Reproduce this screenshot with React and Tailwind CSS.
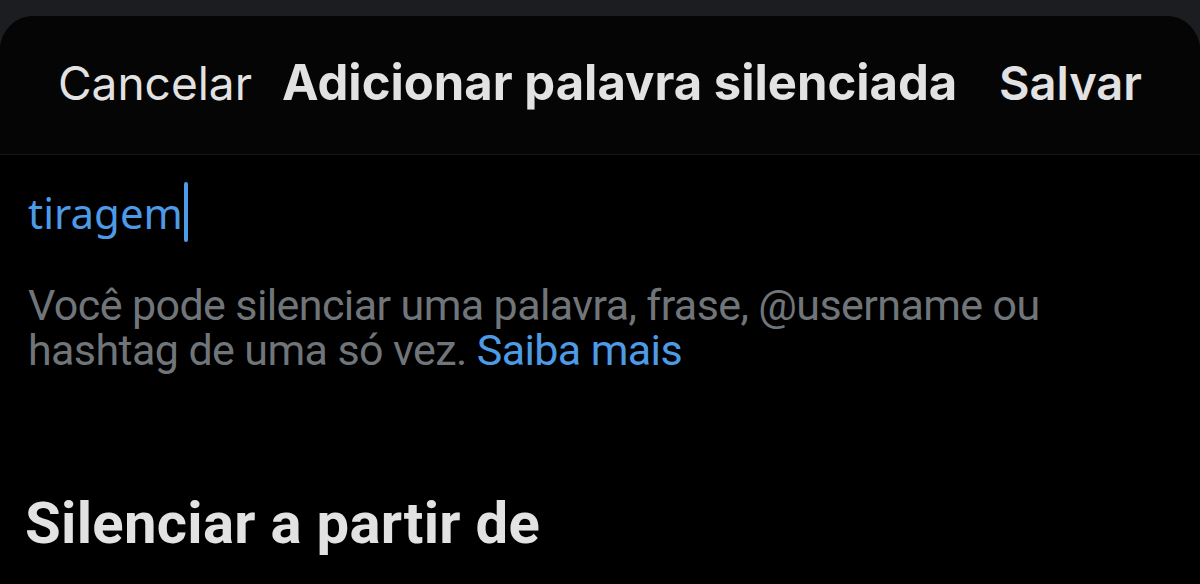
export default function App() {
  return (
    <div className="h-[584px] w-[1200px] overflow-hidden bg-[#1c1d21]">
      <div className="mt-[16px] h-full overflow-hidden rounded-t-[34px] bg-black">
        <div className="flex h-[139px] items-center border-b border-[#151515] bg-[#050505] px-[58px] pb-[4px] font-['Inter',sans-serif] text-[#e2e2e2]">
          <span className="text-[46px] font-normal">Cancelar</span>
          <span className="ml-[30px] text-[49px] font-bold">Adicionar palavra silenciada</span>
          <span className="ml-auto text-[47px] font-semibold">Salvar</span>
        </div>

        <div className="pl-[28px] pr-[40px] pt-[26px]">
          <div className="flex h-[62px] items-center font-['Noto_Sans',sans-serif] text-[42px] text-[#4d9be6]">
            <span>tiragem</span>
            <span className="ml-[1px] h-[60px] w-[4px] rounded-full bg-[#4d9be6]" />
          </div>

          <p className="mt-[40px] font-['Roboto',sans-serif] text-[43px] leading-[45px] tracking-[-0.6px] text-[#707579]">
            Você pode silenciar uma palavra, frase, @username ou hashtag de uma só vez.{" "}
            <span className="text-[#4d9be6]">Saiba mais</span>
          </p>

          <h2 className="-ml-[3px] mt-[121px] font-['Roboto',sans-serif] text-[58px] font-bold leading-none tracking-[0.3px] text-[#e2e2e2]">
            Silenciar a partir de
          </h2>
        </div>
      </div>
    </div>
  );
}
